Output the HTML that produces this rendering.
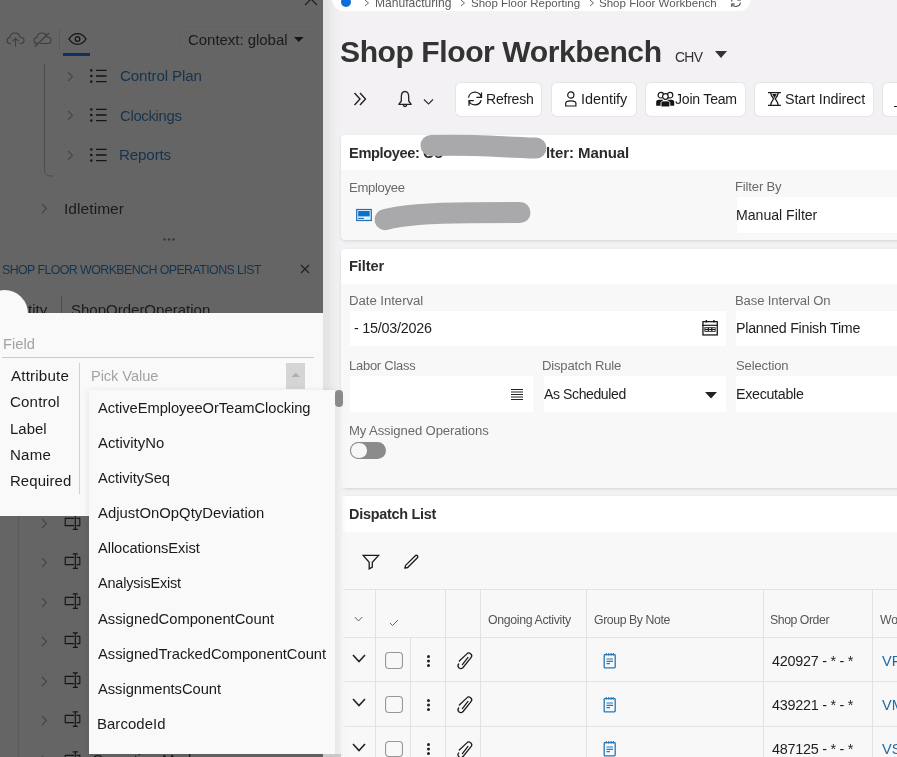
<!DOCTYPE html>
<html><head><meta charset="utf-8"><style>
html,body{margin:0;padding:0;}
body{width:897px;height:757px;overflow:hidden;position:relative;background:#f3f1f4;font-family:"Liberation Sans",sans-serif;}
.r{position:absolute;}
.t{position:absolute;line-height:1;white-space:nowrap;will-change:transform;}
</style></head><body>
<div class="r" style="left:323px;top:0px;width:18px;height:757px;background:linear-gradient(to right,#e2e2e2 0px,#e6e6e6 6px,#ebebeb 8px,#efeef0 13px,#f3f1f4 18px);"></div><div class="r" style="left:332px;top:-20px;width:419px;height:30.7px;background:#ffffff;border-radius:12px;"></div><div class="r" style="left:341px;top:-3px;width:10px;height:10px;border-radius:50%;background:#0b6fd8"></div><svg class="r" style="left:364px;top:-1px" width="6" height="8" viewBox="0 0 6 8"><path d="M1 1 L4.5 4 L1 7" fill="none" stroke="#666" stroke-width="1"/></svg><svg class="r" style="left:459.5px;top:-1px" width="6" height="8" viewBox="0 0 6 8"><path d="M1 1 L4.5 4 L1 7" fill="none" stroke="#666" stroke-width="1"/></svg><svg class="r" style="left:588.5px;top:-1px" width="6" height="8" viewBox="0 0 6 8"><path d="M1 1 L4.5 4 L1 7" fill="none" stroke="#666" stroke-width="1"/></svg><div class="t" style="left:375.33px;top:-3px;font-size:12.07px;letter-spacing:0.000px;color:#5a5a5a;">Manufacturing</div><div class="t" style="left:470.88px;top:-2px;font-size:11.48px;letter-spacing:0.000px;color:#5a5a5a;">Shop Floor Reporting</div><div class="t" style="left:598.88px;top:-2px;font-size:11.54px;letter-spacing:0.000px;color:#5a5a5a;">Shop Floor Workbench</div><svg class="r" style="left:730px;top:-4px" width="12" height="12" viewBox="0 0 12 12"><path d="M1.6 5.5 A4.5 4.5 0 0 1 10 3.8 M10.4 6.5 A4.5 4.5 0 0 1 2 8.2" fill="none" stroke="#555" stroke-width="1.1"/><path d="M10.3 1 L10.2 4.2 L7.2 3.9 M1.7 11 L1.8 7.8 L4.8 8.1" fill="none" stroke="#555" stroke-width="1.1"/></svg><div class="t" style="left:340.10px;top:37px;font-size:30.10px;letter-spacing:-0.444px;color:#333333;font-weight:700;">Shop Floor Workbench</div><div class="t" style="left:674.80px;top:51px;font-size:13.94px;letter-spacing:-0.720px;color:#333333;">CHV</div><svg class="r" style="left:715px;top:50.5px" width="12" height="7" viewBox="0 0 12 7"><path d="M0 0 L12 0 L6 7 Z" fill="#333"/></svg><svg class="r" style="left:353px;top:91px" width="15" height="16" viewBox="0 0 15 16"><path d="M1.5 2 L7 8 L1.5 14 M7 2 L12.5 8 L7 14" fill="none" stroke="#222" stroke-width="1.4"/></svg><svg class="r" style="left:397px;top:90px" width="16" height="19" viewBox="0 0 16 19"><path d="M8 1.5 C5.5 1.5 4.3 3.5 4.3 7 L4.3 11 L1.8 14.3 L14.2 14.3 L11.7 11 L11.7 7 C11.7 3.5 10.5 1.5 8 1.5 Z M6.3 14.8 A1.7 1.7 0 0 0 9.7 14.8" fill="none" stroke="#222" stroke-width="1.3" stroke-linejoin="round"/></svg><svg class="r" style="left:423px;top:98px" width="11" height="8" viewBox="0 0 11 8"><path d="M1 1.5 L5.5 6 L10 1.5" fill="none" stroke="#333" stroke-width="1.2"/></svg><div class="r" style="left:456px;top:83px;width:85px;height:33px;background:#ffffff;border-radius:5px;box-shadow:0 0 0 1px #e6e5e9;"></div><div class="r" style="left:552px;top:83px;width:83.5px;height:33px;background:#ffffff;border-radius:5px;box-shadow:0 0 0 1px #e6e5e9;"></div><div class="r" style="left:645.7px;top:83px;width:99.69999999999993px;height:33px;background:#ffffff;border-radius:5px;box-shadow:0 0 0 1px #e6e5e9;"></div><div class="r" style="left:755.2px;top:83px;width:118.29999999999995px;height:33px;background:#ffffff;border-radius:5px;box-shadow:0 0 0 1px #e6e5e9;"></div><div class="r" style="left:883px;top:83px;width:37px;height:33px;background:#ffffff;border-radius:5px;box-shadow:0 0 0 1px #e6e5e9;"></div><svg class="r" style="left:463px;top:88px" width="24" height="22" viewBox="0 0 24 22"><path d="M5.5 9.6 A6.5 6.5 0 0 1 18.3 9.4 M18.5 4.4 V9.4 H13.4 M18.2 12.3 A6.5 6.5 0 0 1 5.9 12.6 M6 17.8 V12.5 H10.8" fill="none" stroke="#1a1a1a" stroke-width="1.25"/></svg><div class="t" style="left:485.68px;top:92px;font-size:14.06px;letter-spacing:-0.244px;color:#1e1e1e;">Refresh</div><svg class="r" style="left:564px;top:91px" width="13" height="16" viewBox="0 0 13 16"><circle cx="6.8" cy="4" r="3.1" fill="none" stroke="#1a1a1a" stroke-width="1.2"/><path d="M1.7 15 V12.3 C1.7 10.6 3.6 9.8 6.8 9.8 C10 9.8 11.9 10.6 11.9 12.3 V15 Z" fill="none" stroke="#1a1a1a" stroke-width="1.2"/></svg><div class="t" style="left:580.70px;top:92px;font-size:14.42px;letter-spacing:-0.031px;color:#1e1e1e;">Identify</div><svg class="r" style="left:655px;top:91px" width="21" height="17" viewBox="0 0 21 17"><path d="M1.2 14.8 V11 C1.2 9.5 2.5 8.8 4 8.8 H8 V14.8 Z M19.2 14.8 V11 C19.2 9.5 17.9 8.8 16.4 8.8 H12.5 V14.8 Z" fill="#151515"/><circle cx="5.9" cy="4.2" r="2.8" fill="#fff" stroke="#151515" stroke-width="1.2"/><circle cx="15" cy="4.2" r="2.8" fill="#fff" stroke="#151515" stroke-width="1.2"/><path d="M6 15.9 V12.3 C6 10.8 7 9.9 8.5 9.9 H12.3 C13.8 9.9 14.8 10.8 14.8 12.3 V15.9 Z" fill="#151515" stroke="#fff" stroke-width="0.9"/><circle cx="10.4" cy="5.5" r="2.8" fill="#fff" stroke="#151515" stroke-width="1.2"/></svg><div class="t" style="left:674.79px;top:92px;font-size:14.08px;letter-spacing:-0.227px;color:#1e1e1e;">Join Team</div><svg class="r" style="left:767px;top:91px" width="15" height="16" viewBox="0 0 15 16"><path d="M1 1.5 H13.9 M1 14.4 H13.9 M3.6 1.8 Q4 4.5 6.6 7.9 Q4 11.3 3.6 14.1 M11.3 1.8 Q10.9 4.5 8.3 7.9 Q10.9 11.3 11.3 14.1" fill="none" stroke="#1a1a1a" stroke-width="1.25"/><path d="M5.2 3.1 H9.7 L7.45 7.3 Z" fill="#1a1a1a"/></svg><div class="t" style="left:784.96px;top:92px;font-size:14.32px;letter-spacing:-0.076px;color:#1e1e1e;">Start Indirect</div><div class="r" style="left:894px;top:106px;width:4px;height:1.2px;background:#222"></div><div class="r" style="left:341px;top:135px;width:600px;height:105px;background:#f8f8f8;border-radius:4px;box-shadow:0 1px 3px rgba(0,0,0,0.12);overflow:hidden;"><div style="position:absolute;left:0;top:0;right:0;height:35px;background:#fff"></div></div><div class="r" style="left:341px;top:249px;width:600px;height:239px;background:#f8f8f8;border-radius:4px;box-shadow:0 1px 3px rgba(0,0,0,0.12);overflow:hidden;"><div style="position:absolute;left:0;top:0;right:0;height:35px;background:#fff"></div></div><div class="r" style="left:341px;top:496px;width:600px;height:404px;background:#f8f8f8;border-radius:4px;box-shadow:0 1px 3px rgba(0,0,0,0.12);overflow:hidden;"><div style="position:absolute;left:0;top:0;right:0;height:36px;background:#fff"></div></div><div class="t" style="left:349.05px;top:146px;font-size:14.62px;letter-spacing:-0.368px;color:#2c2c2c;font-weight:700;">Employee:</div><div class="t" style="left:423.39px;top:145px;font-size:15.22px;letter-spacing:0.000px;color:#2c2c2c;font-weight:700;">Co</div><div class="t" style="left:545.95px;top:145px;font-size:15.03px;letter-spacing:-0.092px;color:#2c2c2c;font-weight:700;">lter: Manual</div><svg class="r" style="left:400px;top:125px" width="170" height="45" viewBox="400 125 170 45"><path d="M431 145.5 C470 144 500 147 536 148" fill="none" stroke="#a9a9ac" stroke-width="21" stroke-linecap="round"/></svg><div class="t" style="left:349.45px;top:181px;font-size:13.12px;letter-spacing:-0.311px;color:#6a6a6a;">Employee</div><svg class="r" style="left:356px;top:208px" width="17" height="14" viewBox="0 0 17 14"><rect x="0.7" y="1.5" width="14.6" height="11" fill="#e2f4ff" stroke="#1f6db5" stroke-width="1.2"/><rect x="2.2" y="3" width="11.5" height="5.4" fill="#0b6fcf"/><rect x="2.2" y="9.9" width="5.7" height="1" fill="#1a5b94"/></svg><svg class="r" style="left:360px;top:190px" width="190" height="55" viewBox="360 190 190 55"><path d="M385 219.7 C398 216 420 213 470 212.8 L520 212.5" fill="none" stroke="#a9a9ac" stroke-width="21" stroke-linecap="round"/></svg><div class="t" style="left:735.36px;top:180px;font-size:13.03px;letter-spacing:-0.138px;color:#6a6a6a;">Filter By</div><div class="r" style="left:737px;top:197px;width:163px;height:35.599999999999994px;background:#ffffff;"></div><div class="t" style="left:736.17px;top:208px;font-size:14.14px;letter-spacing:-0.028px;color:#1e1e1e;">Manual Filter</div><div class="t" style="left:349.05px;top:259px;font-size:14.67px;letter-spacing:-0.120px;color:#2c2c2c;font-weight:700;">Filter</div><div class="t" style="left:349.24px;top:294px;font-size:13.22px;letter-spacing:-0.054px;color:#6a6a6a;">Date Interval</div><div class="t" style="left:735.35px;top:294px;font-size:13.09px;letter-spacing:-0.118px;color:#6a6a6a;">Base Interval On</div><div class="r" style="left:350px;top:311px;width:375.5px;height:34.5px;background:#ffffff;"></div><div class="r" style="left:736.4px;top:311px;width:163.60000000000002px;height:34.5px;background:#ffffff;"></div><div class="t" style="left:353.66px;top:321px;font-size:14.33px;letter-spacing:-0.229px;color:#1e1e1e;">- 15/03/2026</div><div class="t" style="left:736.36px;top:321px;font-size:14.25px;letter-spacing:-0.266px;color:#1e1e1e;">Planned Finish Time</div><svg class="r" style="left:701px;top:319px" width="18" height="18" viewBox="0 0 18 18"><rect x="1.95" y="2.65" width="14.3" height="13.3" fill="none" stroke="#1a1a1a" stroke-width="1.3"/><path d="M1.3 6.3 H16.9" stroke="#1a1a1a" stroke-width="1.2"/><path d="M5.4 1 V3.6 M13 1 V3.6" stroke="#1a1a1a" stroke-width="1.4"/><rect x="3.4" y="8.2" width="11.2" height="4.6" fill="#1a1a1a"/><path d="M4.3 9.4 H6.7 M7.9 9.4 H10.2 M11.4 9.4 H13.8 M4.3 11.5 H6.7 M7.9 11.5 H10.2 M11.4 11.5 H13.8" stroke="#fff" stroke-width="0.9"/></svg><div class="t" style="left:348.97px;top:360px;font-size:12.92px;letter-spacing:-0.215px;color:#6a6a6a;">Labor Class</div><div class="t" style="left:542.26px;top:359px;font-size:13.04px;letter-spacing:-0.151px;color:#6a6a6a;">Dispatch Rule</div><div class="t" style="left:735.81px;top:359px;font-size:13.05px;letter-spacing:-0.144px;color:#6a6a6a;">Selection</div><div class="r" style="left:350px;top:376px;width:183px;height:35.5px;background:#ffffff;"></div><div class="r" style="left:543.5px;top:376px;width:182.0px;height:35.5px;background:#ffffff;"></div><div class="r" style="left:736.4px;top:376px;width:163.60000000000002px;height:35.5px;background:#ffffff;"></div><svg class="r" style="left:510px;top:388px" width="14" height="14" viewBox="0 0 14 14"><path d="M1 1.5 H13 M1 4 H13 M1 6.5 H13 M1 9 H13 M1 11.5 H13" stroke="#222" stroke-width="1.2"/></svg><div class="t" style="left:544.00px;top:387px;font-size:14.05px;letter-spacing:-0.407px;color:#1e1e1e;">As Scheduled</div><svg class="r" style="left:704.5px;top:391.5px" width="12" height="7" viewBox="0 0 12 7"><path d="M0 0 L12 0 L6 6.5 Z" fill="#222"/></svg><div class="t" style="left:736.16px;top:387px;font-size:14.24px;letter-spacing:-0.292px;color:#1e1e1e;">Executable</div><div class="t" style="left:349.15px;top:424px;font-size:13.11px;letter-spacing:-0.114px;color:#6a6a6a;">My Assigned Operations</div><div class="r" style="left:350px;top:442px;width:36px;height:16.5px;border-radius:9px;background:#8b8b8b"></div><div class="r" style="left:351px;top:443px;width:15.5px;height:14.5px;border-radius:50%;background:#f7f7f7;box-shadow:0 0 0 0.8px #8b8b8b"></div><div class="t" style="left:349.26px;top:507px;font-size:14.42px;letter-spacing:-0.260px;color:#2c2c2c;font-weight:700;">Dispatch List</div><svg class="r" style="left:361.5px;top:553.8px" width="18" height="17" viewBox="0 0 18 17"><path d="M1.2 1.4 H16.6 L10.3 8.3 V13.1 L7.2 14.9 V8.3 Z" fill="none" stroke="#1a1a1a" stroke-width="1.3" stroke-linejoin="miter"/></svg><svg class="r" style="left:403px;top:554px" width="16" height="16" viewBox="0 0 16 16"><path d="M1.8 14.2 L2.6 11.4 L12.3 1.7 C12.9 1.1 13.8 1.1 14.4 1.7 C15 2.3 15 3.2 14.4 3.8 L4.7 13.5 Z" fill="none" stroke="#1a1a1a" stroke-width="1.3" stroke-linejoin="round"/></svg><div class="r" style="left:343px;top:589px;width:557px;height:1px;background:#e2e2e2;"></div><div class="r" style="left:343px;top:637px;width:557px;height:1px;background:#e2e2e2;"></div><div class="r" style="left:343px;top:681px;width:557px;height:1px;background:#e2e2e2;"></div><div class="r" style="left:343px;top:725.5px;width:557px;height:1.0px;background:#e2e2e2;"></div><div class="r" style="left:375px;top:589px;width:1px;height:168px;background:#e2e2e2;"></div><div class="r" style="left:445px;top:589px;width:1px;height:168px;background:#e2e2e2;"></div><div class="r" style="left:480px;top:589px;width:1px;height:168px;background:#e2e2e2;"></div><div class="r" style="left:586px;top:589px;width:1px;height:168px;background:#e2e2e2;"></div><div class="r" style="left:763px;top:589px;width:1px;height:168px;background:#e2e2e2;"></div><div class="r" style="left:872px;top:589px;width:1px;height:168px;background:#e2e2e2;"></div><div class="r" style="left:410px;top:637px;width:1px;height:120px;background:#e2e2e2;"></div><svg class="r" style="left:354px;top:616px" width="9" height="7" viewBox="0 0 9 7"><path d="M0.8 1 L4.5 5 L8.2 1" fill="none" stroke="#666" stroke-width="1"/></svg><svg class="r" style="left:388.5px;top:619px" width="10" height="8" viewBox="0 0 10 8"><path d="M1 4 L3.5 6.5 L9 1" fill="none" stroke="#666" stroke-width="1"/></svg><div class="t" style="left:488.15px;top:614px;font-size:12.32px;letter-spacing:-0.344px;color:#555555;">Ongoing Activity</div><div class="t" style="left:594.19px;top:614px;font-size:12.29px;letter-spacing:-0.410px;color:#555555;">Group By Note</div><div class="t" style="left:770.25px;top:614px;font-size:12.27px;letter-spacing:-0.438px;color:#555555;">Shop Order</div><div class="t" style="left:879.94px;top:614px;font-size:12.20px;letter-spacing:0.000px;color:#555555;">Wo</div><svg class="r" style="left:351.5px;top:654.0px" width="14" height="9" viewBox="0 0 14 9"><path d="M1 1 L7 7.5 L13 1" fill="none" stroke="#222" stroke-width="1.6"/></svg><div class="r" style="left:385.2px;top:652.0px;width:17.7px;height:16.7px;border-radius:4px;box-shadow:inset 0 0 0 1.1px #979797"></div><svg class="r" style="left:426px;top:654.5px" width="5" height="12" viewBox="0 0 5 12"><circle cx="2.5" cy="1.5" r="1.5" fill="#222"/><circle cx="2.5" cy="6" r="1.5" fill="#222"/><circle cx="2.5" cy="10.5" r="1.5" fill="#222"/></svg><svg class="r" style="left:450px;top:645.0px" width="30" height="30" viewBox="450 645 30 30"><path d="M459.3 661.0 L466.6 654.1 A2.8 2.8 0 0 1 471.0 657.7 L463.1 667.5 A2.8 2.8 0 0 1 458.7 663.9 M462.4 664.6 L468.0 657.4" fill="none" stroke="#1a1a1a" stroke-width="1.25" stroke-linecap="round"/></svg><svg class="r" style="left:602px;top:651.5px" width="15" height="17" viewBox="0 0 15 17"><rect x="2.2" y="2.6" width="11" height="13.3" rx="0.8" fill="none" stroke="#2477b8" stroke-width="1.3"/><path d="M4.3 1 V3.6 M6.7 1 V3.6 M9.1 1 V3.6 M11.3 1 V3.6" stroke="#2477b8" stroke-width="1.1"/><path d="M4.5 7 H11 M4.5 9.3 H11 M4.5 11.6 H8" stroke="#2477b8" stroke-width="1.2"/></svg><div class="t" style="left:771.61px;top:654px;font-size:14.37px;letter-spacing:-0.253px;color:#1e1e1e;">420927 - * - *</div><div class="t" style="left:881.93px;top:654px;font-size:14.50px;letter-spacing:0.000px;color:#1f6aa6;">VP</div><svg class="r" style="left:351.5px;top:698.2px" width="14" height="9" viewBox="0 0 14 9"><path d="M1 1 L7 7.5 L13 1" fill="none" stroke="#222" stroke-width="1.6"/></svg><div class="r" style="left:385.2px;top:696.2px;width:17.7px;height:16.7px;border-radius:4px;box-shadow:inset 0 0 0 1.1px #979797"></div><svg class="r" style="left:426px;top:698.7px" width="5" height="12" viewBox="0 0 5 12"><circle cx="2.5" cy="1.5" r="1.5" fill="#222"/><circle cx="2.5" cy="6" r="1.5" fill="#222"/><circle cx="2.5" cy="10.5" r="1.5" fill="#222"/></svg><svg class="r" style="left:450px;top:689.2px" width="30" height="30" viewBox="450 645 30 30"><path d="M459.3 661.0 L466.6 654.1 A2.8 2.8 0 0 1 471.0 657.7 L463.1 667.5 A2.8 2.8 0 0 1 458.7 663.9 M462.4 664.6 L468.0 657.4" fill="none" stroke="#1a1a1a" stroke-width="1.25" stroke-linecap="round"/></svg><svg class="r" style="left:602px;top:695.7px" width="15" height="17" viewBox="0 0 15 17"><rect x="2.2" y="2.6" width="11" height="13.3" rx="0.8" fill="none" stroke="#2477b8" stroke-width="1.3"/><path d="M4.3 1 V3.6 M6.7 1 V3.6 M9.1 1 V3.6 M11.3 1 V3.6" stroke="#2477b8" stroke-width="1.1"/><path d="M4.5 7 H11 M4.5 9.3 H11 M4.5 11.6 H8" stroke="#2477b8" stroke-width="1.2"/></svg><div class="t" style="left:771.61px;top:698px;font-size:14.37px;letter-spacing:-0.253px;color:#1e1e1e;">439221 - * - *</div><div class="t" style="left:881.93px;top:698px;font-size:14.50px;letter-spacing:0.000px;color:#1f6aa6;">VM</div><svg class="r" style="left:351.5px;top:742.5px" width="14" height="9" viewBox="0 0 14 9"><path d="M1 1 L7 7.5 L13 1" fill="none" stroke="#222" stroke-width="1.6"/></svg><div class="r" style="left:385.2px;top:740.5px;width:17.7px;height:16.7px;border-radius:4px;box-shadow:inset 0 0 0 1.1px #979797"></div><svg class="r" style="left:426px;top:743px" width="5" height="12" viewBox="0 0 5 12"><circle cx="2.5" cy="1.5" r="1.5" fill="#222"/><circle cx="2.5" cy="6" r="1.5" fill="#222"/><circle cx="2.5" cy="10.5" r="1.5" fill="#222"/></svg><svg class="r" style="left:450px;top:733.5px" width="30" height="30" viewBox="450 645 30 30"><path d="M459.3 661.0 L466.6 654.1 A2.8 2.8 0 0 1 471.0 657.7 L463.1 667.5 A2.8 2.8 0 0 1 458.7 663.9 M462.4 664.6 L468.0 657.4" fill="none" stroke="#1a1a1a" stroke-width="1.25" stroke-linecap="round"/></svg><svg class="r" style="left:602px;top:740px" width="15" height="17" viewBox="0 0 15 17"><rect x="2.2" y="2.6" width="11" height="13.3" rx="0.8" fill="none" stroke="#2477b8" stroke-width="1.3"/><path d="M4.3 1 V3.6 M6.7 1 V3.6 M9.1 1 V3.6 M11.3 1 V3.6" stroke="#2477b8" stroke-width="1.1"/><path d="M4.5 7 H11 M4.5 9.3 H11 M4.5 11.6 H8" stroke="#2477b8" stroke-width="1.2"/></svg><div class="t" style="left:771.61px;top:742px;font-size:14.37px;letter-spacing:-0.253px;color:#1e1e1e;">487125 - * - *</div><div class="t" style="left:881.93px;top:742px;font-size:14.50px;letter-spacing:0.000px;color:#1f6aa6;">VS</div>
<div class="r" style="left:0px;top:0px;width:323px;height:757px;background:#656565;"></div><svg class="r" style="left:304px;top:-6px" width="14" height="12" viewBox="0 0 14 12"><path d="M1 -1 L13 11 M13 -1 L1 11" stroke="#222" stroke-width="1.3"/></svg><svg class="r" style="left:6px;top:32px" width="19" height="15" viewBox="0 0 19 15"><path d="M5 11.5 H4 C2 11.5 1 10 1 8.5 C1 6.8 2.3 5.6 3.8 5.6 C4.2 3 6.3 1 9 1 C11.6 1 13.5 2.8 14 5 C16.3 5 18 6.5 18 8.5 C18 10.3 16.6 11.5 14.8 11.5 H13.5" fill="none" stroke="#3e3e3e" stroke-width="1.1"/><path d="M9.5 14.5 V6.5 M6.5 9.3 L9.5 6.3 L12.5 9.3" fill="none" stroke="#3e3e3e" stroke-width="1.1"/></svg><svg class="r" style="left:33px;top:32px" width="19" height="15" viewBox="0 0 19 15"><path d="M5 11.5 H4 C2 11.5 1 10 1 8.5 C1 6.8 2.3 5.6 3.8 5.6 C4.2 3 6.3 1 9 1 C11.6 1 13.5 2.8 14 5 C16.3 5 18 6.5 18 8.5 C18 10.3 16.6 11.5 14.8 11.5 H7" fill="none" stroke="#3e3e3e" stroke-width="1.1"/><path d="M2 14.5 L16 1" stroke="#3e3e3e" stroke-width="1.1"/></svg><div class="r" style="left:59px;top:30px;width:1px;height:19px;background:#5a5a5a;"></div><svg class="r" style="left:68px;top:32px" width="19" height="14" viewBox="0 0 19 14"><path d="M1 7 C3.5 3 6.5 1.6 9.5 1.6 C12.5 1.6 15.5 3 18 7 C15.5 11 12.5 12.4 9.5 12.4 C6.5 12.4 3.5 11 1 7 Z" fill="none" stroke="#151515" stroke-width="1.4"/><circle cx="9.5" cy="7" r="2.3" fill="none" stroke="#151515" stroke-width="1.3"/></svg><div class="r" style="left:63px;top:52.5px;width:27px;height:3.0px;background:#0e3160;"></div><div class="r" style="left:180px;top:27px;width:134px;height:25px;border-radius:3px;box-shadow:0 0 0 1px rgba(0,0,0,0.022)"></div><div class="t" style="left:187.65px;top:32px;font-size:15.00px;letter-spacing:-0.036px;color:#1b1b1b;">Context: global</div><svg class="r" style="left:293.6px;top:37.3px" width="10" height="6" viewBox="0 0 10 6"><path d="M0 0 L9.6 0 L4.8 5 Z" fill="#151515"/></svg><svg class="r" style="left:40px;top:60px" width="20" height="120" viewBox="40 60 20 120"><path d="M44.5 64 V170 C44.5 174 47 176 51 176 H53" fill="none" stroke="#4c4c4c" stroke-width="1"/></svg><svg class="r" style="left:67px;top:70.8px" width="7" height="11" viewBox="0 0 7 11"><path d="M1 1 L5.5 5.5 L1 10" fill="none" stroke="#454545" stroke-width="1.1"/></svg><svg class="r" style="left:89.5px;top:68.8px" width="17" height="14" viewBox="0 0 17 14"><rect x="0.2" y="0.3" width="2.2" height="2.2" fill="#151515"/><rect x="0.2" y="5.9" width="2.2" height="2.2" fill="#151515"/><rect x="0.2" y="11.5" width="2.2" height="2.2" fill="#151515"/><path d="M6 1.4 H16.5 M6 7 H16.5 M6 12.6 H16.5" stroke="#151515" stroke-width="1.3"/></svg><div class="t" style="left:119.64px;top:68px;font-size:15.14px;letter-spacing:-0.110px;color:#16334d;">Control Plan</div><svg class="r" style="left:67px;top:110.15px" width="7" height="11" viewBox="0 0 7 11"><path d="M1 1 L5.5 5.5 L1 10" fill="none" stroke="#454545" stroke-width="1.1"/></svg><svg class="r" style="left:89.5px;top:108.15px" width="17" height="14" viewBox="0 0 17 14"><rect x="0.2" y="0.3" width="2.2" height="2.2" fill="#151515"/><rect x="0.2" y="5.9" width="2.2" height="2.2" fill="#151515"/><rect x="0.2" y="11.5" width="2.2" height="2.2" fill="#151515"/><path d="M6 1.4 H16.5 M6 7 H16.5 M6 12.6 H16.5" stroke="#151515" stroke-width="1.3"/></svg><div class="t" style="left:119.66px;top:109px;font-size:14.82px;letter-spacing:-0.287px;color:#16334d;">Clockings</div><svg class="r" style="left:67px;top:149.5px" width="7" height="11" viewBox="0 0 7 11"><path d="M1 1 L5.5 5.5 L1 10" fill="none" stroke="#454545" stroke-width="1.1"/></svg><svg class="r" style="left:89.5px;top:147.5px" width="17" height="14" viewBox="0 0 17 14"><rect x="0.2" y="0.3" width="2.2" height="2.2" fill="#151515"/><rect x="0.2" y="5.9" width="2.2" height="2.2" fill="#151515"/><rect x="0.2" y="11.5" width="2.2" height="2.2" fill="#151515"/><path d="M6 1.4 H16.5 M6 7 H16.5 M6 12.6 H16.5" stroke="#151515" stroke-width="1.3"/></svg><div class="t" style="left:119.19px;top:147px;font-size:15.13px;letter-spacing:-0.133px;color:#16334d;">Reports</div><svg class="r" style="left:41px;top:203px" width="7" height="11" viewBox="0 0 7 11"><path d="M1 1 L5.5 5.5 L1 10" fill="none" stroke="#454545" stroke-width="1.1"/></svg><div class="t" style="left:63.60px;top:201px;font-size:15.51px;letter-spacing:0.067px;color:#1b1b1b;">Idletimer</div><svg class="r" style="left:163px;top:238px" width="12" height="3" viewBox="0 0 12 3"><circle cx="1.5" cy="1.5" r="1.25" fill="#383838"/><circle cx="6" cy="1.5" r="1.25" fill="#383838"/><circle cx="10.5" cy="1.5" r="1.25" fill="#383838"/></svg><div class="t" style="left:2.44px;top:264px;font-size:12.42px;letter-spacing:-0.588px;color:#16334d;">SHOP FLOOR WORKBENCH OPERATIONS LIST</div><svg class="r" style="left:299.5px;top:264px" width="10" height="10" viewBox="0 0 10 10"><path d="M1 1 L9 9 M9 1 L1 9" stroke="#222" stroke-width="1.2"/></svg><div class="t" style="left:27.77px;top:302px;font-size:15.00px;letter-spacing:0.000px;color:#1b1b1b;">tity</div><div class="r" style="left:61px;top:296px;width:1px;height:17px;background:#4c4c4c;"></div><div class="t" style="left:71.33px;top:302px;font-size:15.00px;letter-spacing:0.000px;color:#1b1b1b;">ShopOrderOperation</div><div class="r" style="left:18px;top:516px;width:1px;height:241px;background:#595959;"></div><svg class="r" style="left:40.5px;top:518.0px" width="7" height="11" viewBox="0 0 7 11"><path d="M1 1 L5.5 5.5 L1 10" fill="none" stroke="#454545" stroke-width="1.1"/></svg><svg class="r" style="left:63.5px;top:514.0px" width="17" height="17" viewBox="0 0 17 17"><path d="M10 4.4 H1.2 V11.6 H10 M12.6 4.4 H15.8 V11.6 H12.6" fill="none" stroke="#151515" stroke-width="1.1"/><path d="M11.3 0.8 V15.3 M8.8 0.8 H13.8 M8.8 15.3 H13.8" stroke="#151515" stroke-width="1.2"/></svg><svg class="r" style="left:40.5px;top:557.45px" width="7" height="11" viewBox="0 0 7 11"><path d="M1 1 L5.5 5.5 L1 10" fill="none" stroke="#454545" stroke-width="1.1"/></svg><svg class="r" style="left:63.5px;top:553.45px" width="17" height="17" viewBox="0 0 17 17"><path d="M10 4.4 H1.2 V11.6 H10 M12.6 4.4 H15.8 V11.6 H12.6" fill="none" stroke="#151515" stroke-width="1.1"/><path d="M11.3 0.8 V15.3 M8.8 0.8 H13.8 M8.8 15.3 H13.8" stroke="#151515" stroke-width="1.2"/></svg><svg class="r" style="left:40.5px;top:596.9px" width="7" height="11" viewBox="0 0 7 11"><path d="M1 1 L5.5 5.5 L1 10" fill="none" stroke="#454545" stroke-width="1.1"/></svg><svg class="r" style="left:63.5px;top:592.9px" width="17" height="17" viewBox="0 0 17 17"><path d="M10 4.4 H1.2 V11.6 H10 M12.6 4.4 H15.8 V11.6 H12.6" fill="none" stroke="#151515" stroke-width="1.1"/><path d="M11.3 0.8 V15.3 M8.8 0.8 H13.8 M8.8 15.3 H13.8" stroke="#151515" stroke-width="1.2"/></svg><svg class="r" style="left:40.5px;top:636.35px" width="7" height="11" viewBox="0 0 7 11"><path d="M1 1 L5.5 5.5 L1 10" fill="none" stroke="#454545" stroke-width="1.1"/></svg><svg class="r" style="left:63.5px;top:632.35px" width="17" height="17" viewBox="0 0 17 17"><path d="M10 4.4 H1.2 V11.6 H10 M12.6 4.4 H15.8 V11.6 H12.6" fill="none" stroke="#151515" stroke-width="1.1"/><path d="M11.3 0.8 V15.3 M8.8 0.8 H13.8 M8.8 15.3 H13.8" stroke="#151515" stroke-width="1.2"/></svg><svg class="r" style="left:40.5px;top:675.8px" width="7" height="11" viewBox="0 0 7 11"><path d="M1 1 L5.5 5.5 L1 10" fill="none" stroke="#454545" stroke-width="1.1"/></svg><svg class="r" style="left:63.5px;top:671.8px" width="17" height="17" viewBox="0 0 17 17"><path d="M10 4.4 H1.2 V11.6 H10 M12.6 4.4 H15.8 V11.6 H12.6" fill="none" stroke="#151515" stroke-width="1.1"/><path d="M11.3 0.8 V15.3 M8.8 0.8 H13.8 M8.8 15.3 H13.8" stroke="#151515" stroke-width="1.2"/></svg><svg class="r" style="left:40.5px;top:715.25px" width="7" height="11" viewBox="0 0 7 11"><path d="M1 1 L5.5 5.5 L1 10" fill="none" stroke="#454545" stroke-width="1.1"/></svg><svg class="r" style="left:63.5px;top:711.25px" width="17" height="17" viewBox="0 0 17 17"><path d="M10 4.4 H1.2 V11.6 H10 M12.6 4.4 H15.8 V11.6 H12.6" fill="none" stroke="#151515" stroke-width="1.1"/><path d="M11.3 0.8 V15.3 M8.8 0.8 H13.8 M8.8 15.3 H13.8" stroke="#151515" stroke-width="1.2"/></svg><svg class="r" style="left:40.5px;top:754.7px" width="7" height="11" viewBox="0 0 7 11"><path d="M1 1 L5.5 5.5 L1 10" fill="none" stroke="#454545" stroke-width="1.1"/></svg><svg class="r" style="left:63.5px;top:750.7px" width="17" height="17" viewBox="0 0 17 17"><path d="M10 4.4 H1.2 V11.6 H10 M12.6 4.4 H15.8 V11.6 H12.6" fill="none" stroke="#151515" stroke-width="1.1"/><path d="M11.3 0.8 V15.3 M8.8 0.8 H13.8 M8.8 15.3 H13.8" stroke="#151515" stroke-width="1.2"/></svg><div class="t" style="left:91.73px;top:752px;font-size:15.00px;letter-spacing:0.000px;color:#1b1b1b;">Operation Mode</div>
<div class="r" style="left:-19px;top:289.5px;width:47px;height:47px;border-radius:50%;background:#f9f9f9"></div><div class="r" style="left:0px;top:313px;width:323px;height:203px;background:#f9f9f9;"></div><div class="t" style="left:3.32px;top:337px;font-size:14.70px;letter-spacing:0.029px;color:#a3a3a3;">Field</div><div class="r" style="left:2px;top:357px;width:312px;height:1px;background:#c9c9c9;"></div><div class="r" style="left:79px;top:363px;width:1px;height:131px;background:#d0d0d0;"></div><div class="t" style="left:11.00px;top:368px;font-size:15.16px;letter-spacing:0.175px;color:#1b1b1b;">Attribute</div><div class="t" style="left:10.25px;top:394px;font-size:15.09px;letter-spacing:0.158px;color:#1b1b1b;">Control</div><div class="t" style="left:9.81px;top:422px;font-size:14.89px;letter-spacing:0.062px;color:#1b1b1b;">Label</div><div class="t" style="left:9.79px;top:447px;font-size:15.07px;letter-spacing:0.242px;color:#1b1b1b;">Name</div><div class="t" style="left:9.81px;top:474px;font-size:14.94px;letter-spacing:0.086px;color:#1b1b1b;">Required</div><div class="t" style="left:91.33px;top:369px;font-size:14.63px;letter-spacing:-0.077px;color:#a3a3a3;">Pick Value</div><div class="r" style="left:286px;top:363px;width:19px;height:26px;background:#d5d5d5;"></div><svg class="r" style="left:291px;top:372px" width="10" height="6" viewBox="0 0 10 6"><path d="M0.4 5 L9 5 L4.7 0.8 Z" fill="#b0b0b0"/></svg><div class="r" style="left:89px;top:390px;width:246px;height:364px;background:#f9f9f9;box-shadow:0 1px 7px rgba(0,0,0,0.10)"></div><div class="t" style="left:98.00px;top:401px;font-size:14.69px;letter-spacing:-0.050px;color:#1b1b1b;">ActiveEmployeeOrTeamClocking</div><div class="t" style="left:98.00px;top:436px;font-size:14.84px;letter-spacing:0.027px;color:#1b1b1b;">ActivityNo</div><div class="t" style="left:98.00px;top:471px;font-size:14.66px;letter-spacing:-0.062px;color:#1b1b1b;">ActivitySeq</div><div class="t" style="left:98.00px;top:506px;font-size:14.84px;letter-spacing:0.030px;color:#1b1b1b;">AdjustOnOpQtyDeviation</div><div class="t" style="left:98.00px;top:541px;font-size:14.66px;letter-spacing:-0.057px;color:#1b1b1b;">AllocationsExist</div><div class="t" style="left:98.00px;top:576px;font-size:14.44px;letter-spacing:-0.166px;color:#1b1b1b;">AnalysisExist</div><div class="t" style="left:98.00px;top:612px;font-size:14.76px;letter-spacing:-0.014px;color:#1b1b1b;">AssignedComponentCount</div><div class="t" style="left:98.00px;top:647px;font-size:14.74px;letter-spacing:-0.025px;color:#1b1b1b;">AssignedTrackedComponentCount</div><div class="t" style="left:98.00px;top:682px;font-size:14.73px;letter-spacing:-0.028px;color:#1b1b1b;">AssignmentsCount</div><div class="t" style="left:96.81px;top:717px;font-size:14.91px;letter-spacing:0.071px;color:#1b1b1b;">BarcodeId</div><div class="r" style="left:335px;top:390px;width:12px;height:367px;background:linear-gradient(to right,#e6e6e6 0px,#ececec 3px,rgba(240,240,240,0.85) 6px,rgba(245,245,245,0.4) 9px,rgba(248,248,248,0) 12px);"></div><div class="r" style="left:335px;top:390px;width:7.7px;height:17px;border-radius:4px;background:#8a8a8a"></div><div class="r" style="left:323px;top:754px;width:18px;height:3px;background:#c9c9c9;"></div>
</body></html>
